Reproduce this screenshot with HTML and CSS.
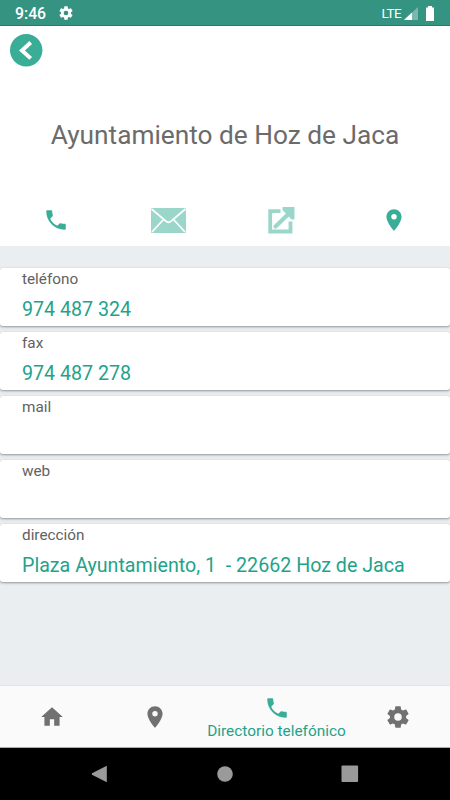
FILE: index.html
```html
<!DOCTYPE html>
<html lang="es">
<head>
<meta charset="utf-8">
<title>Ayuntamiento de Hoz de Jaca</title>
<link rel="stylesheet" href="styles.css">
</head>
<body>
<svg class="defs" aria-hidden="true">
  <symbol id="phone" viewBox="0 0 24 24"><path d="M6.62 10.79c1.44 2.83 3.76 5.14 6.59 6.59l2.2-2.2c.27-.27.67-.36 1.02-.24 1.12.37 2.33.57 3.57.57.55 0 1 .45 1 1V20c0 .55-.45 1-1 1-9.39 0-17-7.61-17-17 0-.55.45-1 1-1h3.5c.55 0 1 .45 1 1 0 1.25.2 2.45.57 3.57.11.35.03.74-.25 1.02l-2.2 2.2z"/></symbol>
  <symbol id="pin" viewBox="0 0 24 24"><path d="M12 2C8.13 2 5 5.13 5 9c0 5.25 7 13 7 13s7-7.75 7-13c0-3.87-3.13-7-7-7zm0 9.5a2.5 2.5 0 0 1 0-5 2.5 2.5 0 0 1 0 5z"/></symbol>
  <symbol id="gear" viewBox="0 0 24 24"><path d="M19.43 12.98c.04-.32.07-.64.07-.98s-.03-.66-.07-.98l2.11-1.65c.19-.15.24-.42.12-.64l-2-3.46c-.12-.22-.39-.3-.61-.22l-2.49 1c-.52-.4-1.08-.73-1.69-.98l-.38-2.65C14.46 2.18 14.25 2 14 2h-4c-.25 0-.46.18-.49.42l-.38 2.65c-.61.25-1.17.59-1.69.98l-2.49-1c-.23-.09-.49 0-.61.22l-2 3.46c-.13.22-.07.49.12.64l2.11 1.65c-.04.32-.07.65-.07.98s.03.66.07.98l-2.11 1.65c-.19.15-.24.42-.12.64l2 3.46c.12.22.39.3.61.22l2.49-1c.52.4 1.08.73 1.69.98l.38 2.65c.03.24.24.42.49.42h4c.25 0 .46-.18.49-.42l.38-2.65c.61-.25 1.17-.59 1.69-.98l2.49 1c.23.09.49 0 .61-.22l2-3.46c.12-.22.07-.49-.12-.64l-2.11-1.65zM12 15.5a3.5 3.5 0 1 1 0-7 3.5 3.5 0 0 1 0 7z"/></symbol>
</svg>
<div class="screen">
  <div class="status">
    <span class="time">9:46</span>
    <svg class="status-gear"><use href="#gear"/></svg>
    <span class="lte">LTE</span>
    <svg class="signal" viewBox="0 0 14 13"><path d="M14 0v13H0z" fill="#fff" opacity=".35"/><path d="M8 5.570V13H0z" fill="#fff"/></svg>
    <svg class="battery" viewBox="0 0 8 15"><path d="M2 0h4v1.500h2V15H0V1.500h2z" fill="#fff"/></svg>
  </div>
  <header class="header">
    <svg class="back" viewBox="0 0 33 33"><circle cx="16.200" cy="16.300" r="16.200" fill="#3aad97"/><path d="M20.700 8.500 12 16.400l8.700 8" fill="none" stroke="#fff" stroke-width="4"/></svg>
    <h1 class="title">Ayuntamiento de Hoz de Jaca</h1>
    <div class="actions">
      <span class="action"><svg class="icon"><use href="#phone"/></svg></span>
      <span class="action"><svg class="mail" viewBox="0 0 35 25"><rect width="35" height="25" rx="1" fill="#9bd6cb"/><path d="M.5 1 15.500 13.600q2 1.400 4 0L34.500 1M1 24l11.500-12.500M34 24 22.500 11.500" fill="none" stroke="#fff" stroke-width="1.800"/></svg></span>
      <span class="action"><svg class="open" viewBox="0 0 27 27"><path d="M12.500 4.200H2.200v20.300h20.300V14.500" fill="none" stroke="#9bd6cb" stroke-width="3.800"/><path d="M7 19.500 22 5.500" fill="none" stroke="#fff" stroke-width="7"/><path d="M7.500 19.500 22 5.500" fill="none" stroke="#9bd6cb" stroke-width="4.200" stroke-linecap="round"/><path d="M14.500 0H26.500V12.500h-3l-9-9.500z" fill="#9bd6cb"/></svg></span>
      <span class="action"><svg class="icon"><use href="#pin"/></svg></span>
    </div>
  </header>
  <main class="list">
    <section class="card"><span class="label">teléfono</span><span class="value">974 487 324</span></section>
    <section class="card"><span class="label">fax</span><span class="value">974 487 278</span></section>
    <section class="card"><span class="label">mail</span></section>
    <section class="card"><span class="label">web</span></section>
    <section class="card"><span class="label">dirección</span><span class="value">Plaza Ayuntamiento, 1  - 22662 Hoz de Jaca</span></section>
  </main>
  <nav class="tabs">
    <span class="tab"><svg class="icon" viewBox="0 0 24 24"><path d="M10 20v-6h4v6h5v-8h3L12 3 2 12h3v8z"/></svg></span>
    <span class="tab"><svg class="icon"><use href="#pin"/></svg></span>
    <span class="tab active"><svg class="icon"><use href="#phone"/></svg><span class="tab-label">Directorio telefónico</span></span>
    <span class="tab"><svg class="icon"><use href="#gear"/></svg></span>
  </nav>
  <div class="system">
    <svg class="key-icon" viewBox="0 0 18 18"><path d="M15.800.8v16.400L1 9.700Q.3 9 1 8.300z"/></svg>
    <svg class="key-icon" viewBox="0 0 18 18"><circle cx="9" cy="9" r="7.800"/></svg>
    <svg class="key-icon" viewBox="0 0 18 18"><rect x=".5" y=".5" width="16.600" height="16.600" rx="1"/></svg>
  </div>
</div>
</body>
</html>
```
FILE: styles.css
```css
* { box-sizing: border-box; }
body { margin: 0; font-family: Roboto, sans-serif; }
svg { display: block; flex: none; }
.defs { display: none; }
.screen { width: 450px; height: 800px; display: flex; flex-direction: column; background: #eaeef1; overflow: hidden; }
.status { height: 26px; flex: none; display: flex; align-items: center; padding: 0 16px 0 15px; background: #349381; border-bottom: 1px solid #16826d; color: #fff; }
.time { width: 42.5px; font-size: 15.8px; font-weight: 500; line-height: 26px; padding-top: 2px; }
.status-gear { width: 16px; height: 16px; fill: #fff; }
.lte { margin-left: auto; font-size: 13.5px; letter-spacing: -0.6px; line-height: 26px; }
.signal { width: 14px; height: 13px; margin: 2px 8px 0 3px; }
.battery { width: 8px; height: 15px; margin-top: 1px; }
.header { height: 220px; flex: none; background: #fff; display: flex; flex-direction: column; }
.back { width: 33px; height: 33px; margin: 8px 0 0 10px; }
.title { margin: 48px 0 0; height: 40px; line-height: 40px; font-size: 26.25px; font-weight: 400; text-align: center; color: #6b6b6b; white-space: nowrap; }
.actions { margin-top: 45px; height: 40px; display: grid; grid-template-columns: repeat(4, 1fr); }
.action { display: flex; align-items: center; justify-content: center; }
.icon { width: 26px; height: 26px; fill: #3aad97; }
.mail { width: 35px; height: 25px; }
.open { width: 27px; height: 27px; }
.list { flex: 1; padding-top: 22px; }
.card { height: 58px; margin-bottom: 6px; padding: 1px 22px 0; display: flex; flex-direction: column; background: #fff; border-radius: 3px; box-shadow: 0 1px 2.5px rgba(0, 0, 0, .38); }
.label { font-size: 15.3px; line-height: 20px; color: #626262; }
.value { margin-top: 8px; font-size: 19.65px; line-height: 26px; color: #1ea38b; white-space: pre; }
.tabs { height: 63px; flex: none; display: grid; grid-template-columns: 103.5px 103.5px 139px 104px; background: #fafafa; border-top: 1px solid #e2e5e7; border-bottom: 1px solid #aaa; }
.tab { display: flex; flex-direction: column; align-items: center; justify-content: center; }
.tab .icon { fill: #717171; }
.tab.active { justify-content: flex-start; padding-top: 9px; }
.tab.active .icon { fill: #3aad97; }
.tab-label { font-size: 15.4px; line-height: 20px; color: #1ea38b; white-space: nowrap; }
.system { height: 52px; flex: none; display: flex; gap: 107px; justify-content: center; align-items: center; background: #000; }
.key-icon { width: 18px; height: 18px; fill: #9a9a9a; }
```
